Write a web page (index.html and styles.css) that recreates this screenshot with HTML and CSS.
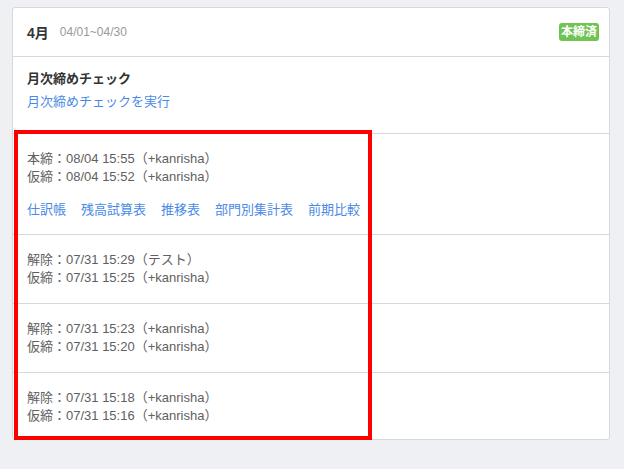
FILE: index.html
```html
<!DOCTYPE html>
<html lang="ja">

<head>
	<meta charset="UTF-8">
	<title>月次締め</title>
	<link rel="stylesheet" href="styles.css">
</head>

<body>
	<div class="page">
		<div class="card">
			<div class="card-head">
				<span class="month">4月</span>
				<span class="range">04/01~04/30</span>
				<span class="badge">本締済</span>
			</div>

			<div class="section check">
				<p class="check-title">月次締めチェック</p>
				<a href="#" class="link">月次締めチェックを実行</a>
			</div>

			<div class="history">
				<div class="section latest">
					<p class="log">本締：08/04 15:55（+kanrisha）</p>
					<p class="log">仮締：08/04 15:52（+kanrisha）</p>
					<div class="reports">
						<a href="#" class="link">仕訳帳</a>
						<a href="#" class="link">残高試算表</a>
						<a href="#" class="link">推移表</a>
						<a href="#" class="link">部門別集計表</a>
						<a href="#" class="link">前期比較</a>
					</div>
				</div>
				<div class="section">
					<p class="log">解除：07/31 15:29（テスト）</p>
					<p class="log">仮締：07/31 15:25（+kanrisha）</p>
				</div>
				<div class="section">
					<p class="log">解除：07/31 15:23（+kanrisha）</p>
					<p class="log">仮締：07/31 15:20（+kanrisha）</p>
				</div>
				<div class="section last">
					<p class="log">解除：07/31 15:18（+kanrisha）</p>
					<p class="log">仮締：07/31 15:16（+kanrisha）</p>
				</div>
				<!-- 注目枠 -->
				<div class="mark"></div>
			</div>
		</div>
	</div>
</body>

</html>
```

FILE: styles.css
```css
html,
body,
p {
	margin: 0;
	padding: 0;
}

body {
	background: #eff0f4;
	font-family: "Liberation Sans", "Noto Sans CJK JP", sans-serif;
	font-size: 13px;
	color: #606060;
}

.page {
	padding: 7px 14px 0 12px;
}

.card {
	background: #fff;
	border: 1px solid #d7d8dc;
	border-radius: 3px;
}

.card-head {
	display: flex;
	align-items: center;
	height: 48px;
	padding: 0 10px 0 14px;
	border-bottom: 1px solid #d7d8dc;
}

.month {
	font-size: 14px;
	font-weight: bold;
	color: #333;
	margin-right: 11px;
}

.range {
	font-size: 12px;
	color: #999;
}

.badge {
	margin-left: auto;
	background: #6fc453;
	color: #fff;
	font-size: 12px;
	font-weight: bold;
	line-height: 18px;
	padding: 0 2px;
	border-radius: 3px;
}

.section {
	padding: 16px 14px;
	border-bottom: 1px solid #d7d8dc;
}

.check {
	padding: 13px 14px 22px;
}

.latest {
	padding-bottom: 15px;
}

.last {
	border-bottom: 0;
	padding-bottom: 14px;
}

.check-title {
	font-size: 13px;
	font-weight: bold;
	color: #333;
	line-height: 18px;
	margin-bottom: 5px;
}

.link {
	color: #4a8ae6;
	text-decoration: none;
	line-height: 18px;
}

.log {
	line-height: 18px;
}

.reports {
	display: flex;
	gap: 15px;
	height: 18px;
	line-height: 18px;
	margin-top: 15px;
}

.history {
	position: relative;
}

.mark {
	position: absolute;
	left: 1px;
	top: -4px;
	width: 350px;
	height: 302px;
	border: 4px solid #ff0000;
	pointer-events: none;
}
```
